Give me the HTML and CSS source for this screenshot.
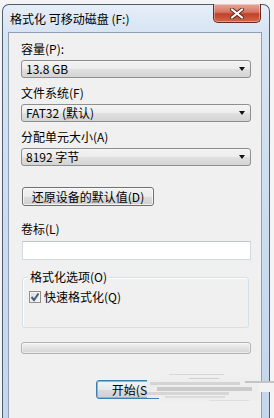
FILE: index.html
```html
<!DOCTYPE html>
<html>
<head>
    <title>格式化 可移动磁盘 (F:)</title>
    <meta name="viewport" content="width=device-width, initial-scale=1">
    <link rel="stylesheet" href="styles.css">
</head>
<body>
    <div class="window">
        <div class="titlebar">
            <span class="title">格式化 可移动磁盘 (F:)</span>
            <div class="close">
                <svg width="14" height="11" viewBox="0 0 14 11">
                    <path d="M2 1.5 L12 9.5 M12 1.5 L2 9.5" stroke="#5a2a22" stroke-width="4" stroke-linecap="round"/>
                    <path d="M2 1.5 L12 9.5 M12 1.5 L2 9.5" stroke="#fff" stroke-width="2.2" stroke-linecap="round"/>
                </svg>
            </div>
        </div>

        <div class="client">
            <div class="label">容量(P):</div>
            <div class="combo"><span>13.8 GB</span><i class="arrow"></i></div>

            <div class="label">文件系统(F)</div>
            <div class="combo"><span>FAT32 (默认)</span><i class="arrow"></i></div>

            <div class="label">分配单元大小(A)</div>
            <div class="combo combo-last"><span>8192 字节</span><i class="arrow"></i></div>

            <div class="btn btn-restore">还原设备的默认值(D)</div>

            <div class="label label-vol">卷标(L)</div>
            <div class="textbox"></div>

            <div class="group">
                <div class="legend">格式化选项(O)</div>
                <div class="check-row">
                    <span class="checkbox">
                        <svg width="10" height="10" viewBox="0 0 10 10">
                            <path d="M1.5 5 L4 8 L8.5 1.5" fill="none" stroke="#4a5f7a" stroke-width="2"/>
                        </svg>
                    </span>
                    <span>快速格式化(Q)</span>
                </div>
            </div>

            <div class="progress"></div>

            <div class="btn btn-start">开始(S)</div>
        </div>
    </div>

    <!-- watermark smear over the bottom buttons -->
    <svg class="smear" width="127" height="40" viewBox="0 0 127 40">
        <rect x="0" y="13" width="30" height="18" fill="#ececec"/>
        <rect x="12" y="10" width="100" height="24" fill="#eeeeee"/>
        <rect x="112" y="15" width="15" height="10" fill="#f2f2f2"/>
        <rect x="3" y="15" width="90" height="3" fill="#d4d4d4"/>
        <rect x="10" y="20" width="95" height="4" fill="#cacaca"/>
        <rect x="0" y="25" width="82" height="3" fill="#d6d6d6"/>
        <rect x="18" y="29" width="60" height="2" fill="#dcdcdc"/>
        <rect x="22" y="7" width="55" height="1" fill="#d8d8d8"/>
        <rect x="42" y="11" width="30" height="1" fill="#d0d0d0"/>
        <rect x="98" y="14" width="29" height="2" fill="#c4c4c4"/>
        <rect x="62" y="33" width="40" height="1" fill="#dedede"/>
    </svg>
</body>
</html>
```

FILE: styles.css
```css
body {
    position: relative;
    margin: 0;
    height: 418px;
    overflow: hidden;
    background-color: #f4f4f4;
    font-family: "Noto Sans CJK SC", sans-serif;
    font-size: 12px;
    line-height: 16px;
    color: #000;
}

.window {
    width: 268px;
    margin: 4px 0 0 2px;
    padding: 0 7px 0 5px;
    box-sizing: border-box;
    border: 1px solid #4f5d6d;
    border-bottom: none;
    border-radius: 7px 7px 0 0;
    background: linear-gradient(to bottom, #e6eef8 0, #d6e3f2 30px, #c3d6ec 100%);
}

.titlebar {
    display: flex;
    height: 27px;
}

.title {
    align-self: center;
    padding-left: 2px;
    font-size: 12px;
}

.close {
    display: flex;
    align-items: center;
    justify-content: center;
    width: 46px;
    height: 18px;
    margin: -1px 1px 0 auto;
    border: 1px solid #6b2a20;
    border-top: none;
    border-radius: 0 0 5px 5px;
    background: linear-gradient(to bottom, #e9a89a 0, #d47664 45%, #c2402a 55%, #d5664a 100%);
    box-shadow: inset 0 0 0 1px rgba(255, 255, 255, 0.35);
}

.client {
    height: 386px;
    padding: 8px 9px 0 12px;
    box-sizing: border-box;
    border: 1px solid #8fa0b4;
    border-bottom: none;
    background-color: #f0f0f0;
}

.label {
    margin-bottom: 3px;
}

.label-vol {
    margin-bottom: 4px;
}

.combo {
    display: flex;
    align-items: center;
    width: 230px;
    height: 18px;
    margin-bottom: 7px;
    padding: 0 5px 0 4px;
    box-sizing: border-box;
    border: 1px solid #8e8f8f;
    border-radius: 3px;
    background: linear-gradient(to bottom, #f4f4f4 0, #ececec 50%, #e0e0e0 51%, #d4d4d4 100%);
}

.combo-last {
    margin-bottom: 21px;
}

.arrow {
    width: 0;
    height: 0;
    margin-left: auto;
    border-left: 3.5px solid transparent;
    border-right: 3.5px solid transparent;
    border-top: 4px solid #111;
}

.btn {
    display: flex;
    align-items: center;
    justify-content: center;
    height: 19px;
    box-sizing: border-box;
    border: 1px solid #707070;
    border-radius: 3px;
    background: linear-gradient(to bottom, #f2f2f2 0, #ebebeb 50%, #dddddd 51%, #cfcfcf 100%);
    box-shadow: inset 0 0 0 1px rgba(255, 255, 255, 0.7);
}

.btn-restore {
    width: 132px;
    margin: 0 0 15px 1px;
}

.textbox {
    width: 229px;
    height: 19px;
    margin-left: 1px;
    box-sizing: border-box;
    border: 1px solid #d3d7de;
    border-top-color: #c2c6cd;
    background-color: #fff;
}

.group {
    width: 227px;
    height: 51px;
    margin: 17px 0 0 1px;
    box-sizing: border-box;
    border: 1px solid #d5dfe5;
    border-radius: 3px;
    box-shadow: inset 1px 1px 0 #fff;
}

.legend {
    width: fit-content;
    margin: -9px 0 0 5px;
    padding: 0 2px;
    background-color: #f0f0f0;
}

.check-row {
    display: flex;
    align-items: center;
    gap: 3px;
    margin: 4px 0 0 6px;
}

.checkbox {
    display: flex;
    align-items: center;
    justify-content: center;
    width: 12px;
    height: 12px;
    box-sizing: border-box;
    border: 1px solid #8f8f8f;
    background: linear-gradient(135deg, #dcdcdc 0, #f6f6f6 100%);
    box-shadow: inset 0 0 0 1px #f4f4f4;
}

.progress {
    width: 230px;
    height: 12px;
    margin-top: 14px;
    box-sizing: border-box;
    border: 1px solid #b2b2b2;
    border-radius: 3px;
    background: linear-gradient(to bottom, #f3f3f3 0, #e2e2e2 50%, #d6d6d6 100%);
    box-shadow: inset 0 0 0 1px rgba(255, 255, 255, 0.5);
}

.btn-start {
    width: 75px;
    margin: 26px 0 0 75px;
    padding-right: 4px;
    border-color: #3c7fb1;
    background: linear-gradient(to bottom, #f0f4f6 0, #e6eaec 50%, #d8dcde 51%, #cdd1d3 100%);
    box-shadow: inset 0 0 0 1px #62c5ec;
}

.smear {
    position: absolute;
    left: 147px;
    top: 367px;
}
```
